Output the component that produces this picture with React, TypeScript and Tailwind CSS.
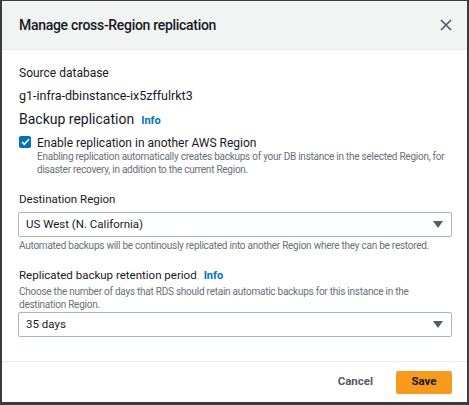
import React from 'react'

const Info = () => <span className="ml-[7px] text-[11px] font-bold text-[#0073bb]">Info</span>

const Caret = () => (
  <svg width="10" height="7" viewBox="0 0 10 7" className="shrink-0">
    <path d="M0 0h10L5 7z" fill="#545b64" />
  </svg>
)

const Select = ({ value }: { value: string }) => (
  <div className="-ml-px flex h-[25px] items-center justify-between rounded-[2px] border border-[#aab7b8] bg-white pl-[7px] pr-[8px] text-[11.5px] text-[#16191f]">
    <span>{value}</span>
    <Caret />
  </div>
)

const App: React.FC = () => {
  return (
    <div
      className="h-[405px] w-[469px] overflow-hidden bg-white"
      style={{ fontFamily: 'Roboto, "Noto Sans", sans-serif' }}
    >
      <div className="flex h-full flex-col border-t border-l-2 border-r-2 border-b-[3px] border-[#3c3c3c]">
        {/* Header */}
        <div className="flex h-[49px] shrink-0 items-center justify-between border-b border-[#eaeded] bg-[#f2f3f3] pl-[17px] pr-[15px]">
          <h1 className="text-[14px] font-medium tracking-[-0.3px] text-[#16191f]">Manage cross-Region replication</h1>
          <svg width="12" height="12" viewBox="0 0 12 12">
            <path d="M1 1l10 10M11 1L1 11" stroke="#545b64" strokeWidth="1.7" fill="none" />
          </svg>
        </div>

        {/* Body */}
        <div className="flex-1 pl-[17px] pr-[15px] pt-[14px]">
          <div className="text-[12px] leading-[18px] text-[#16191f]">Source database</div>
          <div className="mt-[5px] text-[12.5px] leading-[18px] text-[#16191f]">g1-infra-dbinstance-ix5zffulrkt3</div>

          <div className="mt-[4px] flex items-baseline text-[14px] leading-[20px] text-[#16191f]">
            Backup replication
            <Info />
          </div>

          <div className="mt-[3px] flex items-start gap-[6px]">
            <div className="mt-[2px] flex h-[12px] w-[12px] shrink-0 items-center justify-center rounded-[2px] bg-[#0073bb]">
              <svg width="9" height="8" viewBox="0 0 9 8">
                <path d="M1 4l2.3 2.3L8 1.3" stroke="#fff" strokeWidth="1.6" fill="none" />
              </svg>
            </div>
            <div>
              <div className="text-[12px] leading-[18px] text-[#16191f]">Enable replication in another AWS Region</div>
              <div className="-mt-[2px] text-[10px] leading-[13px] tracking-[-0.25px] text-[#687078]">
                Enabling replication automatically creates backups of your DB instance in the selected Region, for disaster recovery, in addition to the current Region.
              </div>
            </div>
          </div>

          <div className="mt-[14px] text-[11.5px] leading-[18px] text-[#16191f]">Destination Region</div>
          <div className="mt-[4px]">
            <Select value="US West (N. California)" />
          </div>
          <div className="mt-[2px] text-[10px] leading-[13px] tracking-[-0.25px] text-[#687078]">
            Automated backups will be continously replicated into another Region where they can be restored.
          </div>

          <div className="mt-[14px] flex items-baseline text-[11.5px] leading-[18px] text-[#16191f]">
            Replicated backup retention period
            <Info />
          </div>
          <div className="text-[10px] leading-[13px] tracking-[-0.25px] text-[#687078]">
            Choose the number of days that RDS should retain automatic backups for this instance in the destination Region.
          </div>
          <div className="mt-[1px]">
            <Select value="35 days" />
          </div>
        </div>

        {/* Footer */}
        <div className="flex h-[41px] shrink-0 items-center justify-end gap-[23px] border-t border-[#eaeded] pr-[15px]">
          <span className="text-[11.5px] font-bold text-[#545b64]">Cancel</span>
          <div className="flex h-[23px] w-[56px] items-center justify-center rounded-[2px] bg-[#f89a1e] text-[11.5px] font-bold text-[#16191f]">
            Save
          </div>
        </div>
      </div>
    </div>
  )
}

export default App
